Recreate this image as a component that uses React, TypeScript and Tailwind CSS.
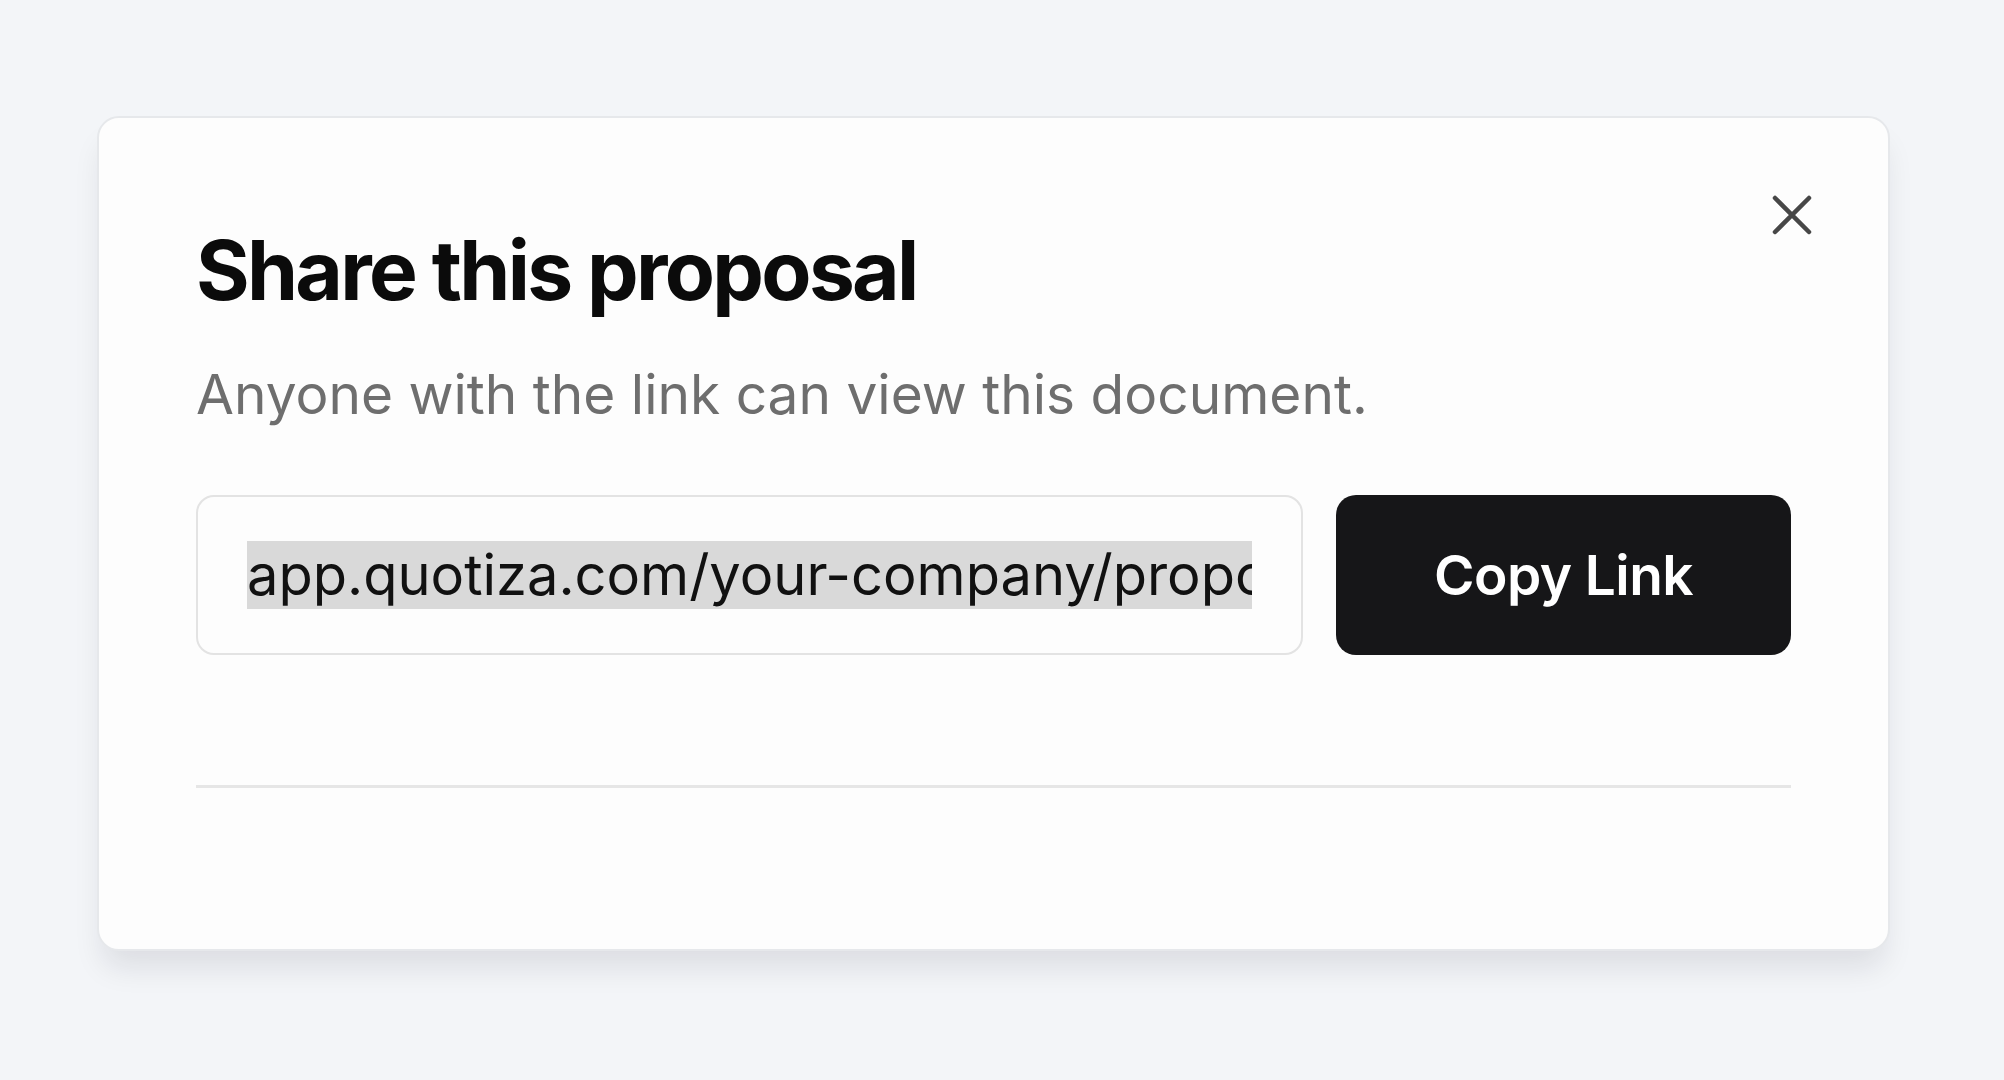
const url = "app.quotiza.com/your-company/proposal";

function CloseIcon() {
  return (
    <svg width="40" height="40" viewBox="0 0 40 40" fill="none" aria-hidden="true">
      <path d="M3 3L37 37M37 3L3 37" stroke="#474747" strokeWidth="4.5" strokeLinecap="round" />
    </svg>
  );
}

export default function App() {
  return (
    <div className="min-h-screen w-full bg-[#f3f5f8] pl-[97px] pt-[116px] font-['Inter',sans-serif]">
      <div className="relative w-[1793px] rounded-[22px] border-2 border-[#e6e8eb] bg-[#fdfdfd] px-[97px] pb-[161px] pt-[112px] shadow-[0_22px_30px_-6px_rgba(15,23,42,0.10)]">
        <button className="absolute right-[76px] top-[77px] flex items-center justify-center" aria-label="Close">
          <CloseIcon />
        </button>

        <h2 className="text-[82px] font-bold leading-none tracking-[-0.033em] text-[#0b0b0b]">Share this proposal</h2>
        <p className="mt-[55px] text-[55px] leading-none text-[#6e6e6e]">
          Anyone with the link can view this document.
        </p>

        <div className="mt-[73px] flex gap-[33px]">
          <div className="flex h-[160px] min-w-0 flex-1 items-center rounded-[18px] border-2 border-[#e3e3e3] bg-[#fdfdfd] px-[49px]">
            <div className="w-full min-w-0 overflow-hidden whitespace-nowrap">
              <span className="bg-[#d9d9d9] text-[56px] leading-[68px] text-[#111111]">{url}</span>
            </div>
          </div>
          <button className="flex h-[160px] w-[455px] shrink-0 items-center justify-center rounded-[20px] bg-[#161618] text-[55px] font-semibold tracking-[-0.01em] text-white">
            Copy Link
          </button>
        </div>

        <div className="mt-[130px] h-[3px] bg-[#e6e6e6]" />
      </div>
    </div>
  );
}
